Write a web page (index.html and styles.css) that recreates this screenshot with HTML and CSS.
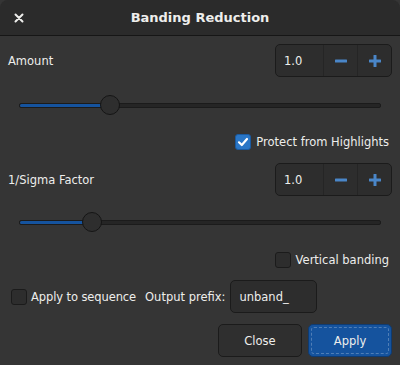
FILE: index.html
```html
<!DOCTYPE html>
<html lang="en">
<head>
    <meta charset="UTF-8">
    <title>Banding Reduction</title>
    <link rel="stylesheet" href="styles.css">
</head>
<body>

<div class="dialog">
    <header class="titlebar">
        <button class="close-x" aria-label="Close">
            <svg width="10" height="10" viewBox="0 0 10 10"><path d="M1.5 1.5 L8.5 8.5 M8.5 1.5 L1.5 8.5" stroke="#eeeeec" stroke-width="2" stroke-linecap="round"/></svg>
        </button>
        <h1>Banding Reduction</h1>
    </header>

    <main class="content">
        <div class="row row-amount">
            <span class="label">Amount</span>
            <div class="spin">
                <span class="spin-value">1.0</span>
                <span class="spin-btn">
                    <svg width="12" height="12" viewBox="0 0 12 12"><rect x="0" y="4.5" width="12" height="3" rx="0.5" fill="#4a86c8"/></svg>
                </span>
                <span class="spin-btn">
                    <svg width="12" height="12" viewBox="0 0 12 12"><rect x="0" y="4.5" width="12" height="3" rx="0.5" fill="#4a86c8"/><rect x="4.5" y="0" width="3" height="12" rx="0.5" fill="#4a86c8"/></svg>
                </span>
            </div>
        </div>

        <div class="slider slider-amount">
            <div class="track">
                <div class="fill" style="width: 25%"></div>
                <div class="knob" style="left: 25%"></div>
            </div>
        </div>

        <div class="row right row-protect">
            <label class="check">
                <span class="box checked">
                    <svg width="12" height="12" viewBox="0 0 12 12"><path d="M2 6.3 L4.8 9 L10 3" stroke="#fff" stroke-width="2.2" fill="none" stroke-linecap="round" stroke-linejoin="round"/></svg>
                </span>
                Protect from Highlights
            </label>
        </div>

        <div class="row row-sigma">
            <span class="label">1/Sigma Factor</span>
            <div class="spin">
                <span class="spin-value">1.0</span>
                <span class="spin-btn">
                    <svg width="12" height="12" viewBox="0 0 12 12"><rect x="0" y="4.5" width="12" height="3" rx="0.5" fill="#4a86c8"/></svg>
                </span>
                <span class="spin-btn">
                    <svg width="12" height="12" viewBox="0 0 12 12"><rect x="0" y="4.5" width="12" height="3" rx="0.5" fill="#4a86c8"/><rect x="4.5" y="0" width="3" height="12" rx="0.5" fill="#4a86c8"/></svg>
                </span>
            </div>
        </div>

        <div class="slider slider-sigma">
            <div class="track">
                <div class="fill" style="width: 20%"></div>
                <div class="knob" style="left: 20%"></div>
            </div>
        </div>

        <div class="row right row-vertical">
            <label class="check">
                <span class="box"></span>
                Vertical banding
            </label>
        </div>

        <div class="row row-sequence">
            <label class="check">
                <span class="box"></span>
                Apply to sequence
            </label>
            <span class="prefix-label">Output prefix:</span>
            <div class="entry">unband_</div>
        </div>

        <div class="actions">
            <button class="btn">Close</button>
            <button class="btn btn-apply"><span>Apply</span></button>
        </div>
    </main>
</div>

</body>
</html>
```

FILE: styles.css
```css
body {
    margin: 0;
    padding: 0;
    width: 400px;
    height: 365px;
    overflow: hidden;
    background: #353535;
    font-family: 'DejaVu Sans', sans-serif;
    font-size: 11.5px;
    color: #eeeeec;
}

.dialog {
    width: 400px;
    height: 365px;
    background: #353535;
    border-radius: 8px 8px 0 0;
    overflow: hidden;
}

.titlebar {
    position: relative;
    height: 35px;
    background: #2b2b2b;
    border-bottom: 1px solid #161616;
    display: flex;
    align-items: center;
    justify-content: center;
}

.titlebar h1 {
    margin: 0;
    font-size: 13px;
    font-weight: bold;
    color: #eeeeec;
}

.close-x {
    position: absolute;
    left: 10px;
    top: 9px;
    width: 18px;
    height: 18px;
    padding: 0;
    border: none;
    background: transparent;
    display: flex;
    align-items: center;
    justify-content: center;
}

.content {
    padding: 8px 8px 0 8px;
}

.row {
    display: flex;
    align-items: center;
    justify-content: space-between;
}

.row.right {
    justify-content: flex-end;
    padding-right: 3px;
}

.spin {
    display: flex;
    width: 115px;
    height: 31px;
    background: #2d2d2d;
    border: 1px solid #1b1b1b;
    border-radius: 5px;
}

.spin-value {
    width: 39px;
    padding-left: 8px;
    display: flex;
    align-items: center;
    border-right: 1px solid #252525;
}

.spin-btn {
    flex: 1;
    display: flex;
    align-items: center;
    justify-content: center;
}

.spin-btn + .spin-btn {
    border-left: 1px solid #252525;
}

.slider {
    height: 20px;
    padding: 0 11px;
    display: flex;
    align-items: center;
}

.slider-amount {
    margin-top: 18px;
}

.slider-sigma {
    margin-top: 16px;
}

.track {
    position: relative;
    flex: 1;
    height: 3px;
    background: #252525;
    border: 1px solid #1b1b1b;
    border-radius: 2px;
}

.fill {
    height: 100%;
    background: #15539e;
    border-radius: 2px;
}

.knob {
    position: absolute;
    top: 50%;
    width: 18px;
    height: 18px;
    margin: -10px 0 0 -10px;
    border-radius: 50%;
    background: #2e2e2e;
    border: 1px solid #151515;
}

.check {
    display: flex;
    align-items: center;
    gap: 5px;
}

.box {
    width: 14px;
    height: 14px;
    border: 1px solid #1b1b1b;
    border-radius: 3px;
    background: #2d2d2d;
    display: flex;
    align-items: center;
    justify-content: center;
}

.box.checked {
    background: #2a76c6;
    border-color: #1a5aa0;
}

.row-protect {
    margin-top: 19px;
    height: 16px;
}

.row-sigma {
    margin-top: 13px;
}

.row-vertical {
    margin-top: 20px;
    height: 16px;
}

.row-sequence {
    justify-content: flex-start;
    margin-top: 12px;
    padding-left: 3px;
}

.row-sequence .check {
    gap: 4px;
    letter-spacing: -0.1px;
}

.prefix-label {
    margin-left: 9px;
}

.entry {
    margin-left: 5px;
    width: 77px;
    height: 31px;
    padding-left: 8px;
    display: flex;
    align-items: center;
    background: #2d2d2d;
    border: 1px solid #1b1b1b;
    border-radius: 5px;
}

.actions {
    display: flex;
    justify-content: flex-end;
    gap: 6px;
    margin-top: 11px;
}

.btn {
    width: 84px;
    height: 33px;
    font-family: 'DejaVu Sans', sans-serif;
    font-size: 11.5px;
    color: #eeeeec;
    background: #2f2f2f;
    border: 1px solid #1b1b1b;
    border-radius: 5px;
    padding: 0;
}

.btn-apply {
    background: #15539e;
    border-color: #0f3b71;
    padding: 2px;
}

.btn-apply span {
    display: flex;
    align-items: center;
    justify-content: center;
    height: 100%;
    border: 1px dashed rgba(255, 255, 255, 0.25);
    border-radius: 3px;
    box-sizing: border-box;
}
```
